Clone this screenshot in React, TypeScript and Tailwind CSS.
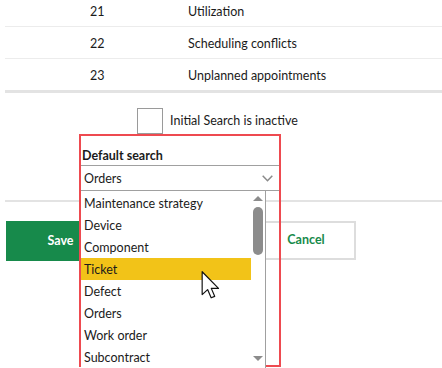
import React from 'react'

const rows = [
  { n: '21', label: 'Utilization' },
  { n: '22', label: 'Scheduling conflicts' },
  { n: '23', label: 'Unplanned appointments' },
]

const options = [
  'Maintenance strategy',
  'Device',
  'Component',
  'Ticket',
  'Defect',
  'Orders',
  'Work order',
  'Subcontract',
]

function Cursor() {
  return (
    <svg width="20" height="28" viewBox="0 0 13 19" className="absolute left-[201px] top-[271px]">
      <path
        d="M0.5 0.5 L0.5 16 L4.2 12.6 L6.6 18.2 L9 17.2 L6.7 11.8 L11.6 11.8 Z"
        fill="#fff"
        stroke="#111"
        strokeWidth="0.8"
        strokeLinejoin="round"
      />
    </svg>
  )
}

export default function App() {
  return (
    <div className="relative w-[442px] h-[368px] overflow-hidden bg-white text-[#1b1b1b] text-[12.5px]" style={{ fontFamily: 'Lato, "Noto Sans", sans-serif' }}>
      {/* Table */}
      <div className="ml-[5px] -mt-[5px]">
        {rows.map((r, i) => (
          <div
            key={r.n}
            className={`flex items-center pt-[4px] h-[32px] ${i === rows.length - 1 ? 'border-b-[3px] border-[#e3e3e3] h-[34px]' : 'border-b border-[#ececec]'}`}
          >
            <span className="w-[183px] pl-[85px]">{r.n}</span>
            <span>{r.label}</span>
          </div>
        ))}
      </div>

      {/* Initial search checkbox */}
      <div className="flex items-center mt-[15px] pl-[137px] gap-[7px]">
        <div className="w-[26px] h-[26px] border border-[#9a9a9a] bg-white" />
        <span className="pt-px">Initial Search is inactive</span>
      </div>

      {/* Separator + buttons */}
      <div className="mt-[66px] ml-[5px] border-t-2 border-[#e3e3e3]" />
      <div className="flex mt-[19px] ml-[6px] gap-[145px]">
        <button className="w-[105px] h-[40px] bg-[#178a4b] text-white font-bold pl-[4px]">Save</button>
        <button className="w-[100px] h-[39px] border-2 border-[#dddddd] bg-white text-[#178a4b] font-bold">Cancel</button>
      </div>

      {/* Dropdown overlay */}
      <div className="absolute left-[79px] top-[134px] w-[202px] h-[233px] border-2 border-[#ee4a50]">
        <div className="font-bold pl-px pt-[12px] h-[29px] leading-[16px]">Default search</div>
        <div className="flex items-center justify-between h-[26px] pt-[3px] bg-white border-y border-[#a0a0a0] pl-[3px] pr-[6px]">
          <span>Orders</span>
          <svg width="11" height="7" viewBox="0 0 11 7" className="-mt-[2px]">
            <path d="M0.7 0.7 L5.5 5.7 L10.3 0.7" fill="none" stroke="#8a8a8a" strokeWidth="1.5" />
          </svg>
        </div>
        <div className="flex w-[185px] h-[178px] bg-white border-r border-[#a0a0a0]">
          <div className="flex-1 flex flex-col pt-px">
            {options.map((o) => (
              <div
                key={o}
                className={`h-[22px] flex items-center pl-[3px] pt-[3px] shrink-0 ${o === 'Ticket' ? 'bg-[#f2c318]' : ''}`}
              >
                {o}
              </div>
            ))}
          </div>
          <div className="w-[14px] flex flex-col items-center pt-[5px]">
            <svg width="10" height="5" viewBox="0 0 10 5">
              <path d="M0 5 L5 0 L10 5 Z" fill="#8c8c8c" />
            </svg>
            <div className="mt-[6px] w-[10px] h-[48px] rounded-[5px] bg-[#8c8c8c]" />
            <div className="flex-1" />
            <svg width="10" height="5" viewBox="0 0 10 5" className="mb-[8px]">
              <path d="M0 0 L10 0 L5 5 Z" fill="#8c8c8c" />
            </svg>
          </div>
        </div>
      </div>

      <Cursor />
    </div>
  )
}
